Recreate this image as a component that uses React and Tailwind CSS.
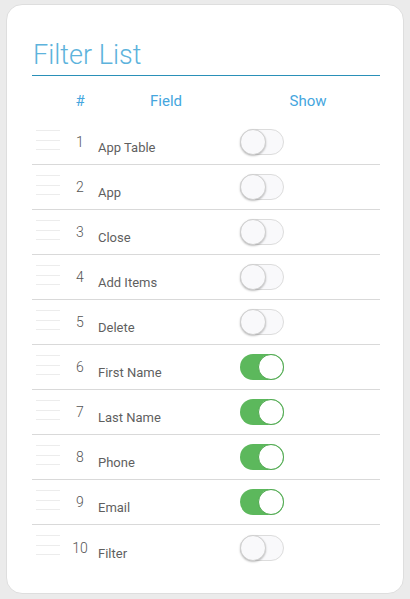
import React from "react";

const rows = [
  { n: 1, name: "App Table", on: false },
  { n: 2, name: "App", on: false },
  { n: 3, name: "Close", on: false },
  { n: 4, name: "Add Items", on: false },
  { n: 5, name: "Delete", on: false },
  { n: 6, name: "First Name", on: true },
  { n: 7, name: "Last Name", on: true },
  { n: 8, name: "Phone", on: true },
  { n: 9, name: "Email", on: true },
  { n: 10, name: "Filter", on: false },
];

function Toggle({ on }) {
  return on ? (
    <div className="relative w-[44px] h-[26px] rounded-full bg-[#5cb85c]">
      <div className="absolute right-0 top-0 w-[26px] h-[26px] rounded-full bg-white border border-[#4fa84f]" />
    </div>
  ) : (
    <div className="relative w-[44px] h-[26px] rounded-full bg-[#f9f9fb] border border-[#dcdcdc]">
      <div className="absolute left-[-1px] top-[-1px] w-[26px] h-[26px] rounded-full bg-[#f9f9fb] border border-[#d0d0d0] shadow-[0_1px_2px_rgba(0,0,0,0.25)]" />
    </div>
  );
}

export default function App() {
  return (
    <div
      className="bg-[#ebebeb] w-[410px] h-[599px] pt-[4px] pl-[6px] pr-[6px] pb-[5px]"
      style={{ fontFamily: "Roboto, 'Liberation Sans', sans-serif" }}
    >
      <div className="bg-white h-[590px] rounded-[16px] border border-[#dedede] pt-[34px] pl-[25px] pr-[23px]">
        <div className="text-[27px] leading-[32px] font-light text-[#5db3dc] pb-[4px] pl-[1px]">
          Filter List
        </div>
        <div className="h-px bg-[#2a90b8]" />
        <div className="flex h-[20px] mt-[15px] mb-[9px] text-[15px] leading-[20px] text-[#45a6de]">
          <div className="w-[36px]" />
          <div className="w-[24px] text-center">#</div>
          <div className="w-[148px] text-center">Field</div>
          <div className="w-[136px] text-center">Show</div>
        </div>
        <div>
          {rows.map((r, i) => (
            <div
              key={r.n}
              className={
                "flex items-center h-[45px] " +
                (i < rows.length - 1 ? "border-b border-[#d9d9d9]" : "")
              }
            >
              <div className="w-[36px] self-start pt-[10px] pl-[4px]">
                <div className="flex flex-col gap-[8.5px] w-[24px]">
                  <div className="h-px bg-[#ececec]" />
                  <div className="h-px bg-[#ececec]" />
                  <div className="h-px bg-[#ececec]" />
                </div>
              </div>
              <div className="w-[24px] text-center text-[14px] leading-[16px] font-light text-[#555]">
                {r.n}
              </div>
              <div className="w-[148px] pl-[6px] mt-[12px] text-[13px] leading-[16px] text-[#5f5f5f]">
                {r.name}
              </div>
              <div className="w-[136px] flex">
                <Toggle on={r.on} />
              </div>
            </div>
          ))}
        </div>
      </div>
    </div>
  );
}
